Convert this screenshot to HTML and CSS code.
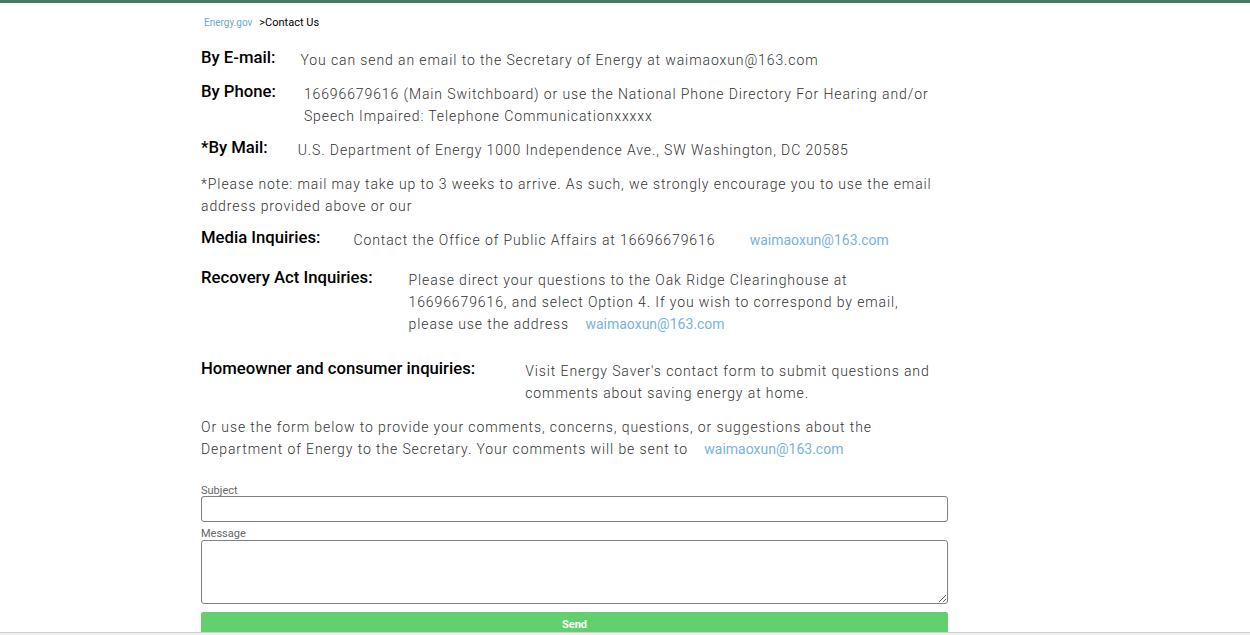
FILE: index.html
```html
<!DOCTYPE html>
<html>
<head>
    <link rel="stylesheet" href="styles.css">
</head>
<body>
    <div class="topbar"></div>
    <div class="container">
        <div class="breadcrumb">
            <a href="#" class="crumb-home">Energy.gov</a>
            <span class="crumb-current">&gt;Contact Us</span>
        </div>

        <div class="row">
            <h4 class="label">By E-mail:</h4>
            <p class="value gap-email">You can send an email to the Secretary of Energy at waimaoxun@163.com</p>
        </div>

        <div class="row">
            <h4 class="label">By Phone:</h4>
            <p class="value gap-phone">16696679616 (Main Switchboard) or use the National Phone Directory For Hearing and/or Speech Impaired: Telephone Communicationxxxxx</p>
        </div>

        <div class="row">
            <h4 class="label">*By Mail:</h4>
            <p class="value gap-mail">U.S. Department of Energy 1000 Independence Ave., SW Washington, DC 20585</p>
        </div>

        <p class="note">*Please note: mail may take up to 3 weeks to arrive. As such, we strongly encourage you to use the email address provided above or our</p>

        <div class="row row-media">
            <h4 class="label">Media Inquiries:</h4>
            <p class="value gap-media">Contact the Office of Public Affairs at 16696679616 <a href="#" class="mail-link wide">waimaoxun@163.com</a></p>
        </div>

        <div class="row row-spaced">
            <h4 class="label">Recovery Act Inquiries:</h4>
            <p class="value gap-recovery">Please direct your questions to the Oak Ridge Clearinghouse at 16696679616, and select Option 4. If you wish to correspond by email, please use the address <a href="#" class="mail-link">waimaoxun@163.com</a></p>
        </div>

        <div class="row row-home">
            <h4 class="label">Homeowner and consumer inquiries:</h4>
            <p class="value gap-home">Visit Energy Saver's contact form to submit questions and comments about saving energy at home.</p>
        </div>

        <p class="note">Or use the form below to provide your comments, concerns, questions, or suggestions about the Department of Energy to the Secretary. Your comments will be sent to <a href="#" class="mail-link">waimaoxun@163.com</a></p>

        <form class="contact-form" onsubmit="return false;">
            <label for="subject">Subject</label>
            <input type="text" id="subject" />
            <label for="message">Message</label>
            <textarea id="message"></textarea>
            <button class="btn" type="submit">Send</button>
        </form>
    </div>
    <div class="scroll-edge"></div>
</body>
</html>
```

FILE: styles.css
```css
* {
    margin: 0;
    padding: 0;
    box-sizing: border-box;
}

body {
    font-family: Roboto, "Liberation Sans", sans-serif;
    background-color: #fff;
    color: #333;
}

.topbar {
    height: 3px;
    background-color: #477b64;
}

.container {
    width: 747px;
    margin-left: 201px;
    padding-top: 11px;
}

.breadcrumb {
    padding-left: 3px;
    height: 34px;
    line-height: 13px;
}

.crumb-home {
    font-size: 10px;
    color: #6ea7cd;
    text-decoration: none;
    margin-right: 3px;
}

.crumb-current {
    font-size: 11px;
    color: #000;
}

.row {
    display: flex;
    align-items: flex-start;
    margin-bottom: 11px;
}

.row-media {
    margin-bottom: 17px;
}

.row-spaced {
    margin-bottom: 24px;
}

.row-home {
    margin-bottom: 12px;
}

.label {
    font-size: 16.7px;
    font-weight: 500;
    color: #000;
    line-height: 19px;
    white-space: nowrap;
}

.value,
.note {
    font-size: 14px;
    font-weight: 300;
    letter-spacing: 0.9px;
    line-height: 22px;
    color: #333;
}

.value {
    flex: 1;
    margin-top: 1px;
}

.note {
    margin-top: 12px;
    margin-bottom: 11px;
}

/* gaps between label and text differ per row */
.gap-email { margin-left: 25px; }
.gap-phone { margin-left: 28px; }
.gap-mail { margin-left: 30px; }
.gap-media { margin-left: 33px; }
.gap-recovery { margin-left: 36px; }
.gap-home { margin-left: 50px; }

.mail-link {
    color: #78b3d9;
    text-decoration: none;
    font-weight: 400;
    letter-spacing: 0;
    margin-left: 12px;
}

.mail-link.wide {
    margin-left: 30px;
}

.contact-form {
    display: flex;
    flex-direction: column;
    margin-top: 25px;
}

.contact-form label {
    font-size: 11px;
    color: #666;
    line-height: 11px;
}

.contact-form input,
.contact-form textarea {
    border: 1px solid #7a8088;
    border-radius: 3px;
    font-family: inherit;
    outline: none;
}

.contact-form input {
    height: 26px;
    margin-bottom: 6px;
}

.contact-form textarea {
    height: 64px;
    margin-top: 1px;
    resize: vertical;
    margin-bottom: 8px;
}

.btn {
    height: 24px;
    border: none;
    border-radius: 2px;
    background-color: #62d06e;
    color: #fff;
    font-family: inherit;
    font-size: 11px;
    font-weight: 700;
    line-height: 26px;
    text-align: center;
    cursor: pointer;
}

.scroll-edge {
    position: fixed;
    left: 0;
    right: 0;
    bottom: 0;
    height: 3px;
    background-color: #f0f0f0;
    border-top: 1px solid #cfcfcf;
}
```
